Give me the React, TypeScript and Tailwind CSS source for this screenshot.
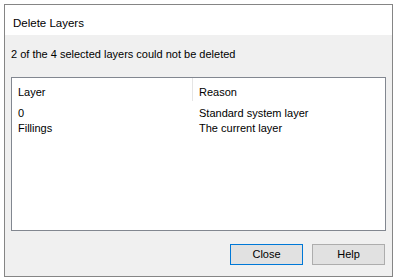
export default function App() {
  const rows = [
    { layer: '0', reason: 'Standard system layer' },
    { layer: 'Fillings', reason: 'The current layer' },
  ];

  return (
    <div className="w-[396px] h-[279px] bg-white pt-[4px] pl-[4px] font-['Liberation_Sans',sans-serif] text-[11px] text-black">
      <div className="w-[389px] h-[273px] border border-[#858585] flex flex-col">
        <div className="h-[30px] bg-white px-[8px] pt-[7px] flex items-center leading-[15px] text-[11.5px]">Delete Layers</div>
        <div className="flex-1 bg-[#f0f0f0] flex flex-col px-[6px]">
          <p className="pt-[12px] leading-[15px]">2 of the 4 selected layers could not be deleted</p>
          <div className="mt-[15px] w-[375px] h-[154px] border border-[#828790] bg-white">
            <div className="flex h-[23px] leading-[15px]">
              <div className="w-[180px] pl-[6px] pt-[7px]">Layer</div>
              <div className="flex-1 border-l border-[#e5e5e5] pl-[6px] pt-[7px]">Reason</div>
            </div>
            <div className="pt-[5px]">
              {rows.map((r) => (
                <div key={r.layer} className="flex leading-[15px]">
                  <div className="w-[180px] pl-[6px]">{r.layer}</div>
                  <div className="flex-1 pl-[7px]">{r.reason}</div>
                </div>
              ))}
            </div>
          </div>
          <div className="flex justify-end gap-[9px] mt-[13px] pr-[1px]">
            <button className="w-[73px] h-[21px] bg-[#e1e1e1] border border-[#0078d7] leading-[15px]">Close</button>
            <button className="w-[73px] h-[21px] bg-[#e1e1e1] border border-[#adadad] leading-[15px]">Help</button>
          </div>
        </div>
      </div>
    </div>
  );
}
